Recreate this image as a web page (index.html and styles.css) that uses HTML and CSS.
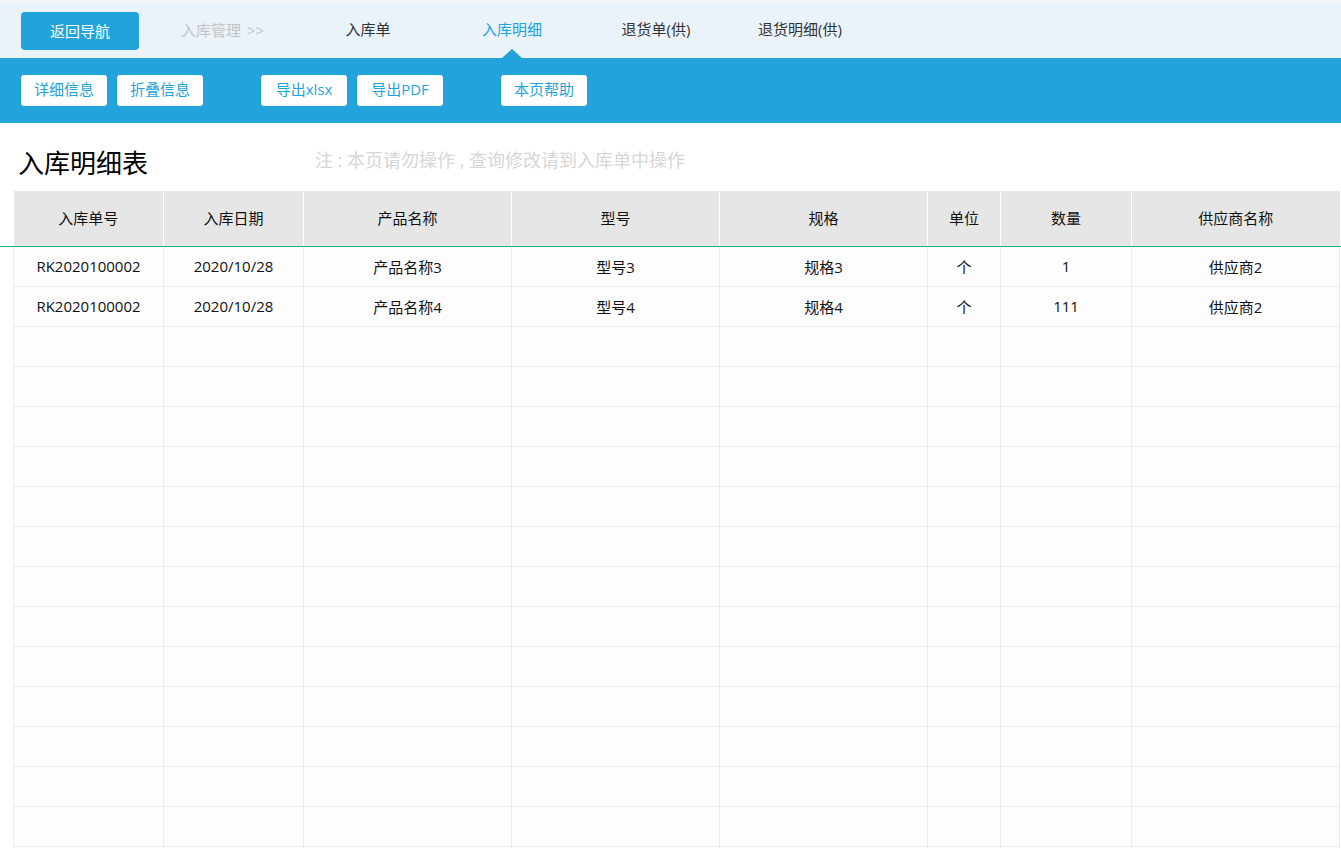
FILE: index.html
```html
<!DOCTYPE html>
<html lang="zh-CN">
<head>
<meta charset="utf-8">
<title>入库明细</title>
<link rel="stylesheet" href="styles.css">
</head>
<body>
<div class="topstrip"></div>
<nav class="nav">
  <a class="back">返回导航</a>
  <span class="crumb">入库管理 &gt;&gt;</span>
  <div class="tabs">
    <a class="tab">入库单</a>
    <a class="tab active">入库明细</a>
    <a class="tab">退货单(供)</a>
    <a class="tab">退货明细(供)</a>
  </div>
</nav>
<div class="toolbar">
  <div class="group"><button class="btn">详细信息</button><button class="btn">折叠信息</button></div>
  <div class="group"><button class="btn">导出xlsx</button><button class="btn">导出PDF</button></div>
  <div class="group"><button class="btn">本页帮助</button></div>
</div>
<div class="titlebar">
  <h1 class="title">入库明细表</h1>
  <span class="note">注 : 本页请勿操作 , 查询修改请到入库单中操作</span>
</div>
<div class="tablewrap">
<table class="grid">
  <colgroup>
    <col class="c1"><col class="c2"><col class="c3"><col class="c4"><col class="c5"><col class="c6"><col class="c7"><col class="c8">
  </colgroup>
  <thead>
    <tr><th>入库单号</th><th>入库日期</th><th>产品名称</th><th>型号</th><th>规格</th><th>单位</th><th>数量</th><th>供应商名称</th></tr>
  </thead>
  <tbody>
    <tr><td>RK2020100002</td><td>2020/10/28</td><td>产品名称3</td><td>型号3</td><td>规格3</td><td>个</td><td>1</td><td>供应商2</td></tr>
    <tr><td>RK2020100002</td><td>2020/10/28</td><td>产品名称4</td><td>型号4</td><td>规格4</td><td>个</td><td>111</td><td>供应商2</td></tr>
    <tr><td></td><td></td><td></td><td></td><td></td><td></td><td></td><td></td></tr>
    <tr><td></td><td></td><td></td><td></td><td></td><td></td><td></td><td></td></tr>
    <tr><td></td><td></td><td></td><td></td><td></td><td></td><td></td><td></td></tr>
    <tr><td></td><td></td><td></td><td></td><td></td><td></td><td></td><td></td></tr>
    <tr><td></td><td></td><td></td><td></td><td></td><td></td><td></td><td></td></tr>
    <tr><td></td><td></td><td></td><td></td><td></td><td></td><td></td><td></td></tr>
    <tr><td></td><td></td><td></td><td></td><td></td><td></td><td></td><td></td></tr>
    <tr><td></td><td></td><td></td><td></td><td></td><td></td><td></td><td></td></tr>
    <tr><td></td><td></td><td></td><td></td><td></td><td></td><td></td><td></td></tr>
    <tr><td></td><td></td><td></td><td></td><td></td><td></td><td></td><td></td></tr>
    <tr><td></td><td></td><td></td><td></td><td></td><td></td><td></td><td></td></tr>
    <tr><td></td><td></td><td></td><td></td><td></td><td></td><td></td><td></td></tr>
    <tr><td></td><td></td><td></td><td></td><td></td><td></td><td></td><td></td></tr>
    <tr><td></td><td></td><td></td><td></td><td></td><td></td><td></td><td></td></tr>
  </tbody>
</table>
</div>
</body>
</html>
```
FILE: styles.css
```css
* { box-sizing: border-box; }
html, body { margin: 0; padding: 0; }
body {
  font-family: "Open Sans", "Noto Sans CJK SC", sans-serif;
  color: #222;
  background: #fff;
  overflow: hidden;
}
.topstrip { height: 4px; background: #f4f7fa; }
.nav {
  height: 54px;
  background: #eaf2fa;
  display: flex;
  align-items: center;
  padding-left: 21px;
}
.back {
  width: 118px;
  height: 38px;
  padding-bottom: 2px;
  background: #23a3db;
  color: #fff;
  border-radius: 4px;
  font-size: 15px;
  display: flex;
  align-items: center;
  justify-content: center;
}
.crumb {
  margin-left: 42px;
  width: 115px;
  padding-bottom: 4px;
  color: #c4c4c4;
  font-size: 15px;
  word-spacing: 2px;
}
.tabs { display: flex; height: 100%; }
.tab {
  width: 144px;
  display: flex;
  align-items: center;
  justify-content: center;
  padding-bottom: 6px;
  font-size: 15px;
  color: #333;
  position: relative;
}
.tab.active { color: #23a3db; }
.tab.active::after {
  content: "";
  position: absolute;
  left: 50%;
  bottom: 0;
  margin-left: -10px;
  border-left: 10px solid transparent;
  border-right: 10px solid transparent;
  border-bottom: 9px solid #23a3db;
}
.toolbar {
  height: 65px;
  background: #23a3db;
  display: flex;
  align-items: center;
  padding-left: 21px;
  gap: 58px;
}
.group { display: flex; gap: 10px; }
.btn {
  width: 86px;
  height: 31px;
  border: none;
  border-radius: 3px;
  background: #fff;
  color: #23a3db;
  font-family: inherit;
  font-size: 15px;
  padding: 0 0 4px;
  cursor: pointer;
}
.titlebar {
  height: 68px;
  display: flex;
  align-items: center;
  padding-left: 18px;
  padding-top: 10px;
}
.title {
  margin: 0;
  font-size: 26px;
  font-weight: normal;
  color: #000;
  width: 297px;
}
.note { color: #d6d6d6; font-size: 18px; margin-top: -6px; }
.tablewrap {
  padding-left: 13px;
  position: relative;
}
.tablewrap::before {
  content: "";
  position: absolute;
  left: 0;
  right: 0;
  top: 55px;
  height: 1px;
  background: #1fb57a;
}
.grid {
  border-collapse: collapse;
  table-layout: fixed;
  width: 1327px;
  font-size: 15px;
}
.c1 { width: 150px; } .c2 { width: 140px; } .c3 { width: 208px; } .c4 { width: 208px; }
.c5 { width: 208px; } .c6 { width: 73px; } .c7 { width: 131px; } .c8 { width: 208px; }
.grid th {
  height: 55px;
  background: #e6e6e6;
  font-weight: normal;
  color: #111;
  border-left: 1px solid #fff;
  border-top: 1px solid #e6e6e6;
  padding: 0 0 3px;
}
.grid th:first-child { border-left: none; }
.grid td {
  height: 40px;
  padding: 0 0 1px;
  text-align: center;
  color: #111;
  background: #fdfdfd;
  border: 1px solid #ececec;
  border-top: none;
}
.grid tbody tr:first-child td { border-top: 1px solid #1fb57a; }
```
